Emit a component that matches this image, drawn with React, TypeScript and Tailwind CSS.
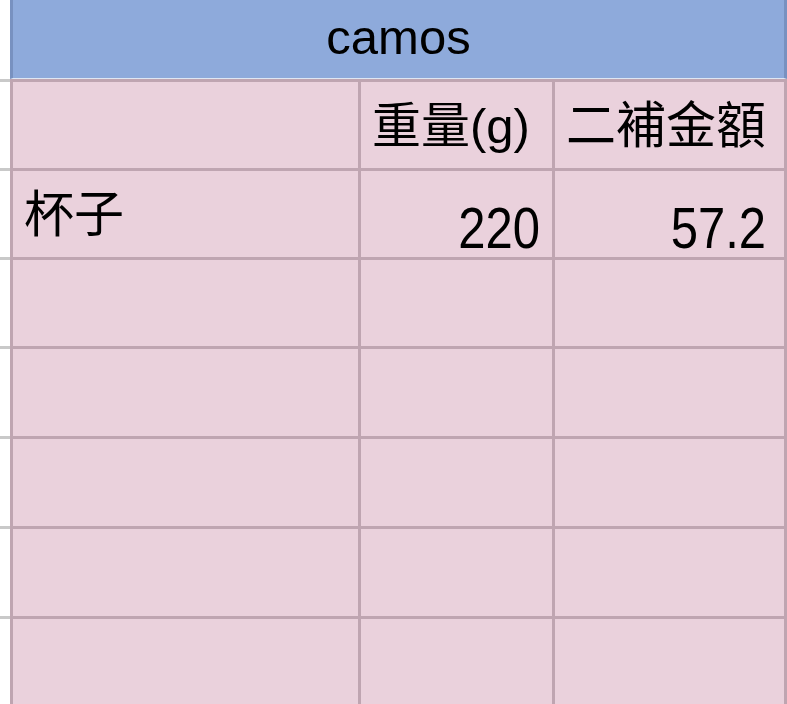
const font = { fontFamily: '"Liberation Sans", "Noto Sans CJK TC", sans-serif' };

const rows = [
  { name: "", weight: "重量(g)", amount: "二補金額", head: true },
  { name: "杯子", weight: "220", amount: "57.2" },
  { name: "", weight: "", amount: "" },
  { name: "", weight: "", amount: "" },
  { name: "", weight: "", amount: "" },
  { name: "", weight: "", amount: "" },
  { name: "", weight: "", amount: "" },
];

const heights = ["h-[86px]", "h-[86px]", "h-[86px]", "h-[87px]", "h-[87px]", "h-[87px]", "h-[90px]"];

export default function App() {
  return (
    <div className="w-[787px] h-[704px] overflow-hidden bg-white flex items-start text-black" style={font}>
      {/* left gutter of the sheet */}
      <div className="w-[10px] shrink-0 flex flex-col">
        <div className="h-[79px] shrink-0" />
        {heights.map((h, i) => (
          <div key={i} className={`${h} shrink-0 border-t-[3px] border-[#c9c9c9] box-content`} />
        ))}
      </div>

      <div className="flex-1 flex flex-col">
        {/* title row */}
        <div className="h-[78px] shrink-0 bg-[#8eaadb] border-l-[3px] border-r-[3px] border-[#7891c0] border-b border-b-[#dfe6f3] flex items-center justify-center box-content">
          <span className="text-[49px] leading-none pb-[4px]">camos</span>
        </div>

        <div className="grid grid-cols-[345px_191px_229px] gap-[3px] bg-[#bfa5b1] p-[3px] pb-0 shrink-0">
          {rows.map((r, i) => (
            <div key={i} className="contents">
              <div className={`${heights[i]} bg-[#ead1dc] flex items-center pl-[11px] text-[50px] leading-none`}>
                <span className="pt-[2px]">{r.name}</span>
              </div>
              <div
                className={`${heights[i]} bg-[#ead1dc] flex items-center leading-none ${
                  r.head ? "pl-[11px] text-[49px]" : "justify-end pr-[12px] text-[49px]"
                }`}
              >
                <span className={r.head ? "pt-[2px]" : "pt-[24px] inline-block scale-y-[1.17]"}>{r.weight}</span>
              </div>
              <div
                className={`${heights[i]} bg-[#ead1dc] flex items-center leading-none ${
                  r.head ? "pl-[11px] text-[50px]" : "justify-end pr-[18px] text-[49px]"
                }`}
              >
                <span className={r.head ? "pt-[2px]" : "pt-[24px] inline-block scale-y-[1.17]"}>{r.amount}</span>
              </div>
            </div>
          ))}
        </div>
      </div>
    </div>
  );
}
